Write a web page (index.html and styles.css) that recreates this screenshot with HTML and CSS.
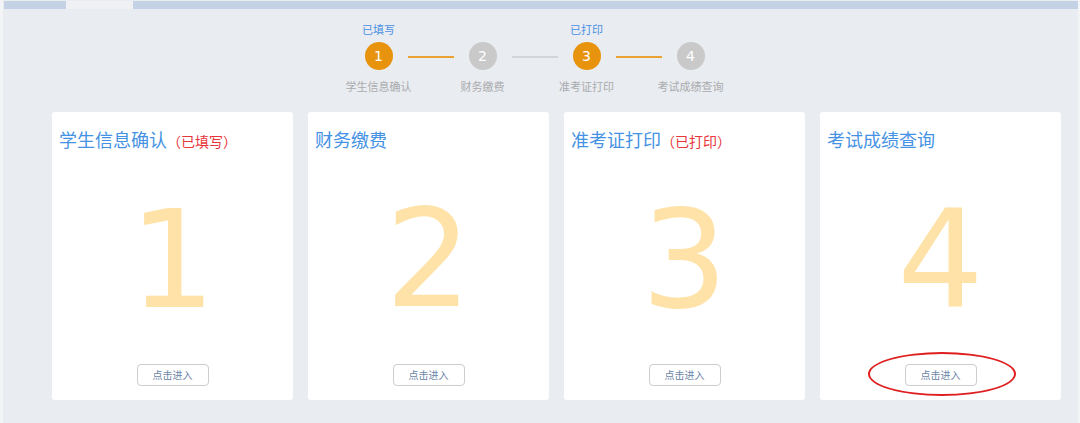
FILE: index.html
```html
<!DOCTYPE html>
<html lang="zh-CN">
<head>
<meta charset="utf-8">
<title>流程</title>
<link rel="stylesheet" href="styles.css">
</head>
<body>
<div class="page">
  <div class="topbar">
    <div class="tb-seg tb-first"></div>
    <div class="tb-gap"></div>
    <div class="tb-seg tb-rest"></div>
  </div>

  <div class="steps">
    <div class="step done">
      <div class="step-top">已填写</div>
      <div class="step-dot">1</div>
      <div class="step-label">学生信息确认</div>
    </div>
    <div class="step-line active"></div>
    <div class="step">
      <div class="step-top"></div>
      <div class="step-dot">2</div>
      <div class="step-label">财务缴费</div>
    </div>
    <div class="step-line"></div>
    <div class="step done">
      <div class="step-top">已打印</div>
      <div class="step-dot">3</div>
      <div class="step-label">准考证打印</div>
    </div>
    <div class="step-line active"></div>
    <div class="step">
      <div class="step-top"></div>
      <div class="step-dot">4</div>
      <div class="step-label">考试成绩查询</div>
    </div>
  </div>

  <div class="cards">
    <div class="card">
      <div class="card-title">学生信息确认<span class="card-status">（已填写）</span></div>
      <div class="card-num">1</div>
      <div class="card-foot"><span class="btn">点击进入</span></div>
    </div>
    <div class="card">
      <div class="card-title">财务缴费</div>
      <div class="card-num">2</div>
      <div class="card-foot"><span class="btn">点击进入</span></div>
    </div>
    <div class="card">
      <div class="card-title">准考证打印<span class="card-status">（已打印）</span></div>
      <div class="card-num">3</div>
      <div class="card-foot"><span class="btn">点击进入</span></div>
    </div>
    <div class="card">
      <div class="card-title">考试成绩查询</div>
      <div class="card-num">4</div>
      <div class="card-foot"><span class="btn-wrap"><span class="btn">点击进入</span><span class="mark"></span></span></div>
    </div>
  </div>
</div>
</body>
</html>
```

FILE: styles.css
```css
html, body {
  margin: 0;
  padding: 0;
}
body {
  background: #f3f4f6;
  font-family: "Noto Sans CJK SC", "Noto Sans", sans-serif;
  width: 1080px;
  height: 423px;
  overflow: hidden;
}
.page {
  margin-left: 3px;
  width: 1075px;
  height: 423px;
  background: #e9ecf0;
}
.topbar {
  display: flex;
  height: 8px;
  padding-top: 1px;
  padding-left: 1px;
}
.tb-seg {
  background: #c3d2e4;
}
.tb-first {
  width: 62px;
}
.tb-gap {
  width: 67px;
  background: #eff1f4;
}
.tb-rest {
  flex: 1;
}

/* steps */
.steps {
  display: flex;
  justify-content: center;
  align-items: flex-start;
  padding-right: 12px;
  margin-top: 11px;
}
.step {
  width: 58px;
  display: flex;
  flex-direction: column;
  align-items: center;
}
.step-top {
  height: 18px;
  font-size: 11px;
  line-height: 18px;
  color: #4a8fe3;
  white-space: nowrap;
}
.step-dot {
  margin-top: 4px;
  width: 28px;
  height: 28px;
  border-radius: 50%;
  background: #c9c9c9;
  color: #fff;
  font-family: "DejaVu Sans", sans-serif;
  font-size: 14px;
  line-height: 28px;
  text-align: center;
}
.step.done .step-dot {
  background: #e8930e;
}
.step-label {
  margin-top: 8px;
  font-size: 11px;
  line-height: 16px;
  color: #a9abae;
  white-space: nowrap;
}
.step-line {
  width: 46px;
  height: 2px;
  margin-top: 36px;
  background: #d2d4d7;
}
.step-line.active {
  background: #eba235;
}

/* cards */
.cards {
  display: flex;
  gap: 15px;
  padding-left: 49px;
  margin-top: 18px;
}
.card {
  width: 241px;
  height: 288px;
  background: #fff;
  border-radius: 3px;
  display: flex;
  flex-direction: column;
  box-sizing: border-box;
  padding-top: 14px;
}
.card-title {
  padding-left: 7px;
  font-size: 18px;
  line-height: 26px;
  color: #4592e4;
  white-space: nowrap;
}
.card-status {
  font-size: 14px;
  color: #e8353a;
}
.card-num {
  flex: 1;
  display: flex;
  align-items: center;
  justify-content: center;
  font-family: "DejaVu Sans", sans-serif;
  font-size: 136px;
  line-height: 1;
  color: #fee2a7;
  padding-top: 2px;
}
.card-foot {
  display: flex;
  justify-content: center;
  padding-bottom: 14px;
}
.btn-wrap {
  position: relative;
  display: inline-flex;
}
.btn {
  display: inline-block;
  width: 70px;
  height: 20px;
  border: 1px solid #cbcdd0;
  border-radius: 4px;
  font-size: 10px;
  line-height: 20px;
  text-align: center;
  color: #6b83a6;
  background: #fff;
}
.mark {
  position: absolute;
  left: -37px;
  top: -12px;
  width: 144px;
  height: 40px;
  border: 2px solid #df1f1f;
  border-radius: 50%;
}
```
